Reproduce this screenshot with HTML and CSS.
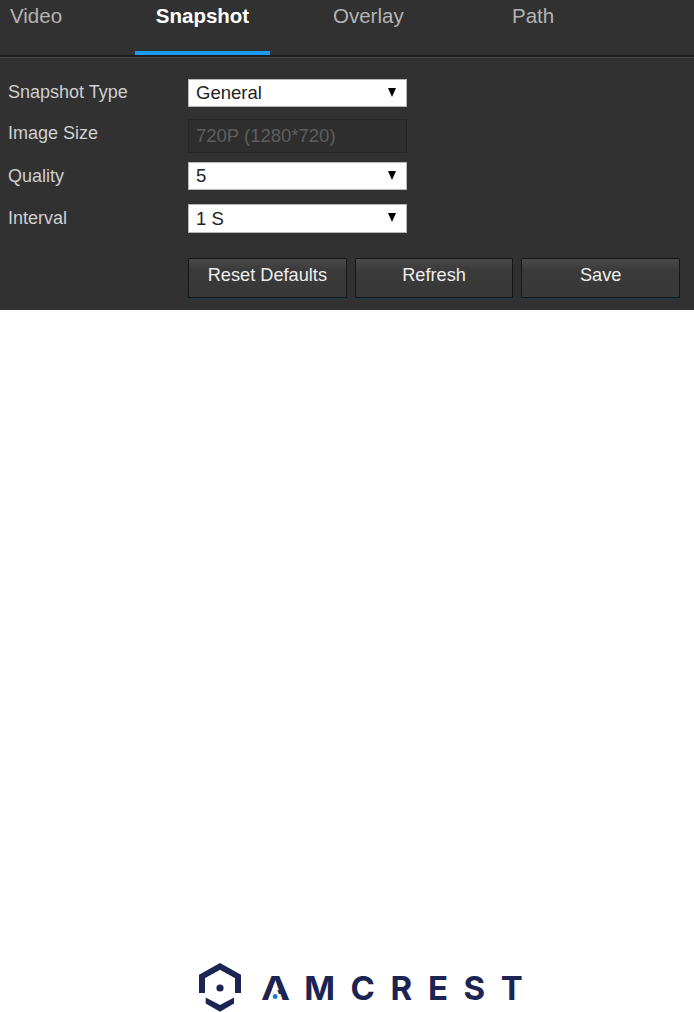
FILE: index.html
```html
<!DOCTYPE html>
<html lang="en">
<head>
<meta charset="utf-8">
<title>Snapshot settings</title>
<link rel="stylesheet" href="styles.css">
</head>
<body>
<main class="panel">
  <nav class="tabs">
    <a class="tab tab-video">Video</a>
    <a class="tab tab-snapshot active">Snapshot</a>
    <a class="tab tab-overlay">Overlay</a>
    <a class="tab">Path</a>
  </nav>
  <form class="form">
    <label class="label">Snapshot Type</label>
    <div class="select"><span>General</span><i class="arrow"></i></div>
    <label class="label">Image Size</label>
    <div class="select disabled"><span>720P (1280*720)</span></div>
    <label class="label">Quality</label>
    <div class="select"><span>5</span><i class="arrow"></i></div>
    <label class="label">Interval</label>
    <div class="select"><span>1 S</span><i class="arrow"></i></div>
    <div class="buttons">
      <button type="button" class="btn">Reset Defaults</button>
      <button type="button" class="btn">Refresh</button>
      <button type="button" class="btn">Save</button>
    </div>
  </form>
</main>
<footer class="logo">
  <svg class="mark" width="42" height="49" viewBox="0 0 42 49">
    <path d="M3 30V13.5L21 3.5L39 13.5V30" fill="none" stroke="#1b2452" stroke-width="6"/>
    <path d="M6.7 34.5L21 42L35 34.5V40.5L21 48.7L6.7 40.5Z" fill="#1b2452"/>
    <circle cx="21" cy="25" r="3.6" fill="#1b2452"/>
  </svg>
  <div class="wordmark"><span class="letter-a">A<i class="dot"></i></span>MCREST</div>
</footer>
</body>
</html>
```
FILE: styles.css
```css
* { box-sizing: border-box; }
html, body { margin: 0; padding: 0; background: #fff; }
body { width: 694px; height: 1012px; overflow: hidden; font-family: "Liberation Sans", Arial, sans-serif; }

.panel { height: 310px; background: #313131; }

.tabs {
  display: grid;
  grid-template-columns: 135px 135px 242px 1fr;
  height: 57px;
  border-bottom: 2px solid #1c1c1c;
  box-shadow: 0 1px 0 #484848;
}
.tab { height: 55px; padding-top: 5px; font-size: 20.5px; line-height: 21px; color: #b4b4b4; }
.tab-video { padding-left: 10px; }
.tab-snapshot { text-align: center; font-weight: bold; color: #fff; border-bottom: 4px solid #1a9bf0; }
.tab-overlay { padding-left: 63px; }

.form {
  display: grid;
  grid-template-columns: 180px 219px;
  grid-template-rows: 28px 46px 37px 43px;
  grid-auto-rows: 40px;
  padding: 22px 0 0 8px;
}
.label { font-size: 18px; line-height: 24px; color: #cfcfcf; margin-top: 1px; }
.label:nth-of-type(2) { margin-top: 14px; }
.label:nth-of-type(3) { margin-top: 11px; }
.label:nth-of-type(4) { margin-top: 16px; }

.select {
  position: relative;
  display: flex;
  align-items: center;
  padding-left: 7px;
  background: #fff;
  border: 1px solid #b5b5b5;
  color: #222;
  font-size: 18.5px;
}
.select.disabled { background: #2e2e2e; border-color: #262626; color: #5e5e5e; }
.select:nth-of-type(2) { margin-top: 12px; height: 34px; }
.select:nth-of-type(3) { margin-top: 9px; height: 28px; }
.select:nth-of-type(4) { margin-top: 14px; height: 29px; }
.arrow {
  position: absolute;
  right: 10px;
  top: 8px;
  border-left: 4px solid transparent;
  border-right: 4px solid transparent;
  border-top: 9px solid #000;
}

.buttons {
  grid-column: 2;
  display: flex;
  gap: 8px;
  width: 492px;
  margin-top: 25px;
}
.btn {
  width: 159px;
  height: 40px;
  padding: 0 0 6px;
  border: 1px solid #151515;
  border-radius: 1px;
  background: linear-gradient(#4a4a4a, #3a3a3a 30%, #383838);
  box-shadow: 0 1px 0 #1d3a46;
  color: #eee;
  font: 18.2px "Liberation Sans", Arial, sans-serif;
}

.logo {
  display: flex;
  align-items: flex-start;
  margin: 653px 0 0 199px;
}
.mark { flex: none; }
.wordmark {
  margin: 5px 0 0 20px;
  font-family: Inter, "Liberation Sans", sans-serif;
  font-weight: 700;
  font-size: 33px;
  line-height: 40px;
  letter-spacing: 15.6px;
  color: #1b2452;
  white-space: nowrap;
}
.letter-a { position: relative; display: inline-block; transform: scaleX(1.18); transform-origin: 0 50%; margin-right: 3px; }
.dot {
  position: absolute;
  left: 5.5px;
  top: 15px;
  width: 12px;
  height: 18px;
  background: #fff;
  clip-path: polygon(50% 0, 100% 100%, 0 100%);
}
.dot::after {
  content: "";
  position: absolute;
  left: 4px;
  top: 11px;
  width: 4px;
  height: 5px;
  border-radius: 50%;
  background: #1b74d8;
}
```
